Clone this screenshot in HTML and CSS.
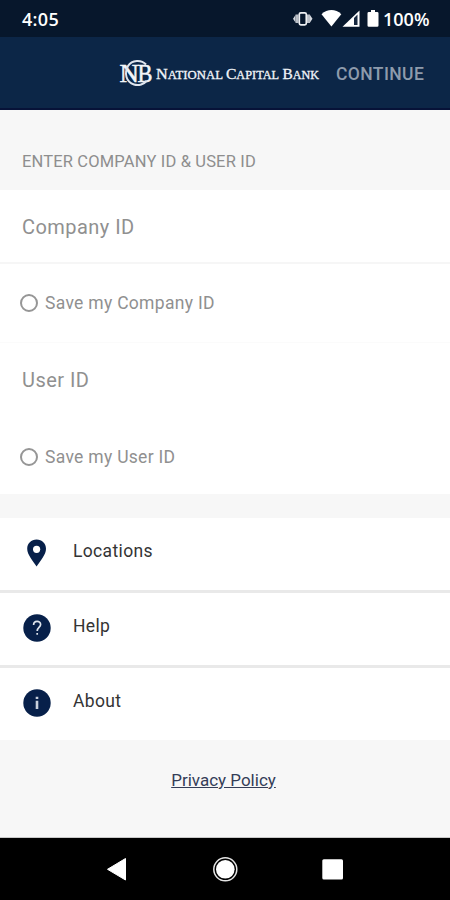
FILE: index.html
```html
<!DOCTYPE html>
<html lang="en">
<head>
<meta charset="utf-8">
<title>National Capital Bank</title>
<link rel="stylesheet" href="styles.css">
</head>
<body>
<div class="screen">
  <div class="status">
    <span class="clock">4:05</span>
    <svg class="status-icons" width="88" height="24" viewBox="292 7 88 24">
      <path d="M293 18.800l2.500-3.800v7.600zM312.500 18.800l-2.500-3.800v7.600z" fill="#d5d9df"/>
      <path d="M295.500 14.500h3v8.600h-3zM307 14.500h3v8.600h-3z" fill="#b9bec6"/>
      <rect x="299.300" y="12.800" width="7" height="12" rx="1.500" fill="#07172c" stroke="#eef0f3" stroke-width="1.700"/>
      <path d="M321.500 14.200C327.500 8.700 335.500 8.700 341.300 14.200L331.400 26.500z" fill="#fff"/>
      <path d="M342.500 26.700L359.500 10.500v16.200z" fill="#fff"/>
      <path d="M354 18l3.500-3.500v10.500H354z" fill="#172840"/>
      <path d="M371 10h4v2h2.200q1.300 0 1.300 1.300v12.200q0 1.300-1.300 1.300h-8.400q-1.300 0-1.300-1.300V13.300q0-1.300 1.300-1.300h2.200z" fill="#fff"/>
    </svg>
    <span class="battery">100%</span>
  </div>
  <header class="header">
    <svg class="logo" width="202" height="32" viewBox="118 58 202 32" font-family="'Liberation Serif', serif" fill="#f2f5f9">
      <g font-size="25" stroke="#f2f5f9" stroke-width=".5">
        <text x="119.500" y="82" textLength="19.500" lengthAdjust="spacingAndGlyphs">N</text>
        <text x="137.500" y="82" textLength="15" lengthAdjust="spacingAndGlyphs">B</text>
      </g>
      <path d="M146 64.500C141.500 59.500 132 59.500 128 66C124 73 126 82 134 84.500C139 86 144 84 146.500 81" fill="none" stroke="#dfe5ee" stroke-width="2"/>
      <g font-size="14.600" stroke="#f2f5f9" stroke-width=".3">
        <text x="156" y="79.300" textLength="67" lengthAdjust="spacingAndGlyphs">N<tspan font-size="11.500">ATIONAL</tspan></text>
        <text x="226" y="79.300" textLength="53" lengthAdjust="spacingAndGlyphs">C<tspan font-size="11.500">APITAL</tspan></text>
        <text x="282.500" y="79.300" textLength="36.500" lengthAdjust="spacingAndGlyphs">B<tspan font-size="11.500">ANK</tspan></text>
      </g>
    </svg>
    <span class="continue">CONTINUE</span>
  </header>
  <h2 class="section-title">ENTER COMPANY ID &amp; USER ID</h2>
  <section class="form">
    <div class="field ruled">Company ID</div>
    <div class="check ruled faint"><i class="ring"></i><span>Save my Company ID</span></div>
    <div class="field">User ID</div>
    <div class="check"><i class="ring"></i><span>Save my User ID</span></div>
  </section>
  <nav class="menu">
    <div class="item">
      <svg width="28" height="28" viewBox="0 0 28 28"><path d="M13.600 .5C8.200 .5 4.200 4.500 4.200 9.700C4.200 15.500 9.500 21.500 13.600 27.500C17.700 21.500 23 15.500 23 9.700C23 4.500 19 .5 13.600 .5z" fill="#07204a"/><circle cx="13.600" cy="10.300" r="3.600" fill="#fff"/></svg>
      <span>Locations</span>
    </div>
    <div class="item">
      <svg width="28" height="28" viewBox="0 0 28 28"><circle cx="14" cy="14" r="13.700" fill="#07204a"/><path d="M10.600 11C10.600 6.300 17.600 6.300 17.600 10.600C17.600 13.300 14.200 13.700 14.200 16.900M14.200 18.900v1.900" fill="none" stroke="#dfe4ec" stroke-width="1.700"/></svg>
      <span>Help</span>
    </div>
    <div class="item">
      <svg width="28" height="28" viewBox="0 0 28 28"><circle cx="14" cy="14" r="13.700" fill="#07204a"/><path d="M14 7.800v2.200M14 11.700v8.300" stroke="#c8d0dc" stroke-width="2.600"/></svg>
      <span>About</span>
    </div>
  </nav>
  <footer class="footer"><a class="privacy">Privacy Policy</a></footer>
  <div class="system-nav">
    <svg width="450" height="62" viewBox="0 838 450 62">
      <path d="M107.500 869.300L125.500 858.500v21.500z" fill="#fff" stroke="#fff" stroke-linejoin="round"/>
      <circle cx="225.300" cy="869.300" r="11.500" fill="none" stroke="#e4e4e4" stroke-width="1.500"/>
      <circle cx="225.300" cy="869.300" r="9.300" fill="#fff"/>
      <rect x="322.300" y="859.300" width="20.700" height="20.200" rx="1.500" fill="#fff"/>
    </svg>
  </div>
</div>
</body>
</html>
```
FILE: styles.css
```css
* { box-sizing: border-box; }
body { margin: 0; background: #f7f7f7; font-family: Roboto, sans-serif; }
.screen { width: 450px; height: 900px; display: flex; flex-direction: column; overflow: hidden; }
.screen > * { flex-shrink: 0; }
svg { display: block; }
span, a { white-space: nowrap; }
.status { height: 37px; background: #07172c; color: #fff; display: flex; align-items: center; padding-left: 22px; font-family: "Open Sans", sans-serif; }
.clock { width: 270px; font-size: 18px; line-height: 24px; font-weight: 600; letter-spacing: .3px; }
.status-icons { flex: none; }
.battery { margin-left: 3px; font-size: 18px; line-height: 24px; font-weight: 600; }
.header { height: 73px; background: #0c2647; border-bottom: 2px solid #071238; display: flex; align-items: center; padding-left: 118px; }
.logo { margin-top: 2px; }
.continue { margin: 2px 0 0 16px; font-size: 17.500px; font-weight: 500; letter-spacing: .4px; color: #8e9bac; }
.section-title { margin: 0; height: 80px; padding: 41px 0 0 22px; font-size: 16.500px; line-height: 22px; font-weight: 400; letter-spacing: .16px; color: #8e8e8e; }
.form { height: 304px; background: #fff; color: #909090; }
.field { height: 74px; padding-left: 22px; font-size: 20px; line-height: 74px; letter-spacing: .45px; }
.check { height: 79px; padding-left: 20px; display: flex; align-items: center; gap: 7px; font-size: 17.500px; letter-spacing: .3px; }
.ruled { border-bottom: 2px solid #f6f6f6; }
.faint { border-bottom: 1px solid #fbfbfb; }
.ring { width: 18px; height: 18px; border: 2px solid #969696; border-radius: 50%; }
.menu { margin-top: 24px; background: #fff; color: #343434; font-size: 17.500px; letter-spacing: .35px; }
.item { height: 75px; padding: 0 0 3px 23px; display: flex; align-items: center; gap: 22px; border-bottom: 3px solid #e9e9e9; }
.item:last-child { height: 72px; border-bottom: 0; }
.item span { margin-top: -3px; }
.footer { flex: 1; padding-top: 29px; text-align: center; font-size: 17px; line-height: 22px; color: #343d57; }
.privacy { text-decoration: underline; margin-right: 3px; }
.system-nav { height: 62px; background: #000; box-shadow: 0 -1px #c9c9c9; }
```
